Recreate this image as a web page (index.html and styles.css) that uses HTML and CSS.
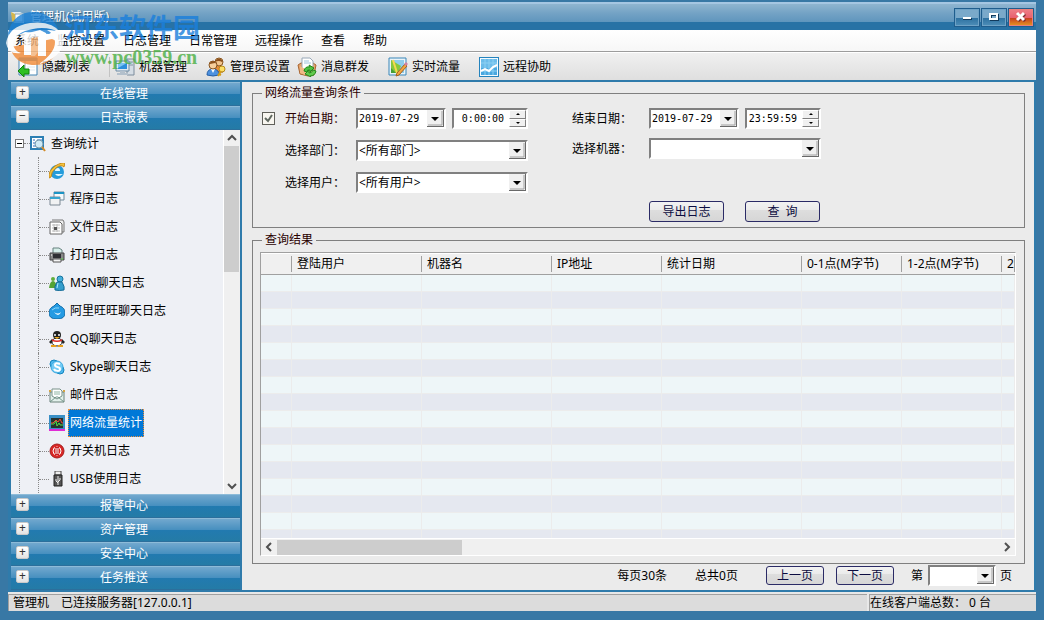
FILE: index.html
```html
<!DOCTYPE html>
<html lang="zh-CN">
<head>
    <meta charset="UTF-8">
    <meta name="viewport" content="width=device-width, initial-scale=1.0">
    <title>管理机(试用版)</title>
    <link rel="stylesheet" href="styles.css">
</head>
<body>

<!-- title bar -->
<header class="titlebar">
    <svg class="app-icon" viewBox="0 0 16 16"><path d="M1 3h9l4 2v9H4z" fill="#dfe9ee"/><path d="M5 5h8v8H5z" fill="#f7fbfd" stroke="#8aa5b5"/><path d="M1 3l4 2v9l-3-2z" fill="#d5b64c"/></svg>
    <h1>管理机(试用版)</h1>
    <div class="win-buttons">
        <button class="win-btn" aria-label="最小化"><svg viewBox="0 0 16 12"><path d="M4 7h9v2H4z" fill="#123a5c"/><path d="M4 6h8v2H4z" fill="#fff"/></svg></button>
        <button class="win-btn" aria-label="最大化"><svg viewBox="0 0 16 12"><path d="M5 4h7v5H5z" fill="none" stroke="#123a5c" stroke-width="2"/><path d="M4 3h7v5H4z" fill="none" stroke="#fff" stroke-width="2"/></svg></button>
        <button class="win-btn win-close" aria-label="关闭"><svg viewBox="0 0 16 12"><path d="M5 3l7 7M12 3l-7 7" stroke="#7a2e2e" stroke-width="3"/><path d="M4 2l7 7M11 2L4 9" stroke="#fff" stroke-width="3"/></svg></button>
    </div>
</header>

<nav class="menu">
    <a href="#">系统</a>
    <a href="#">监控设置</a>
    <a href="#">日志管理</a>
    <a href="#">日常管理</a>
    <a href="#">远程操作</a>
    <a href="#">查看</a>
    <a href="#">帮助</a>
</nav>

<div class="toolbar">
    <button class="tool">
        <svg viewBox="0 0 20 20"><path d="M1 1h18v17H1z" fill="#fff" stroke="#4385b5"/><path d="M1 1h18v3H1z" fill="#5aa3d4"/><path d="M7 4v14" stroke="#9ab"/><path d="M9 7h8M9 10h8M9 13h8" stroke="#dce8f0"/><path d="M0 14l6-6v4h5v5H6v3z" fill="#2fc022" stroke="#12820f"/></svg>
        隐藏列表
    </button>
    <span class="tool-sep"></span>
    <button class="tool">
        <svg viewBox="0 0 20 20"><path d="M12 2h7v16h-7z" fill="#d5dde5" stroke="#7d8c9c"/><path d="M13 5h5M13 8h5" stroke="#8594a4"/><path d="M1 4h13v10H1z" fill="#dfe8ef" stroke="#6d8ba4"/><path d="M3 6h9v6H3z" fill="#2d8fdc"/><path d="M3 6h9l-9 5z" fill="#7cc3f2"/><path d="M5 14h5v2h3v2H2v-2h3z" fill="#b3c0cc"/></svg>
        机器管理
    </button>
    <button class="tool">
        <svg viewBox="0 0 20 20"><path d="M9 10q5-4 8 1v4H9z" fill="#e58c37" stroke="#a45915"/><circle cx="13" cy="5" r="4" fill="#f3c68e" stroke="#885521"/><path d="M9 4q4-5 8 0l-1 1q-3-2-7 0z" fill="#8b501c"/><path d="M1 18q0-6 6-6t6 6q-6 2-12 0z" fill="#4d91df" stroke="#245da5"/><path d="M5 12l2 4 2-4z" fill="#fff"/><circle cx="7" cy="8" r="4" fill="#f7cf9b" stroke="#885521"/><path d="M3 7q4-6 8 0l-2-1-5 1z" fill="#8b501c"/><circle cx="16" cy="12" r="3" fill="#fbe067" stroke="#b98919"/><path d="M15 14l-3 5M13 17l2 1" stroke="#d39b18" stroke-width="2"/></svg>
        管理员设置
    </button>
    <button class="tool">
        <svg viewBox="0 0 20 20"><path d="M1 8l3-2h12l3 2-2 10-6 1-8-2z" fill="#e6a56b" stroke="#a86430"/><path d="M5 1h8l3 3v9H5z" fill="#fff" stroke="#98a8b8"/><path d="M7 4h5M7 6h7" stroke="#9fc4dd"/><path d="M3 9l5 3 8-3v8l-8 1-5-2z" fill="#efb986"/><path d="M7 14q1-5 6-4l-1-2 5 3-4 4v-2q-3-1-3 2z" fill="#4fc242" stroke="#24891d"/><path d="M19 14q-1 5-6 5l1 1-6-3 4-4v3q3 0 4-3z" fill="#62cb4e" stroke="#24891d"/></svg>
        消息群发
    </button>
    <button class="tool">
        <svg viewBox="0 0 20 20"><path d="M1 1h17v17H1z" fill="#e9f3f8" stroke="#3b87b9"/><path d="M3 3h13v13H3z" fill="#8ecdeb"/><path d="M3 3l10 6-3 7H3z" fill="#86c83c"/><path d="M5 3l4 13" stroke="#f6d94e" stroke-width="2"/><path d="M3 11l5 5H3z" fill="#459d35"/><path d="M17 7l2 2-8 9-3 1 1-3z" fill="#f2a63d" stroke="#a45f21"/><path d="M17 6l2 2" stroke="#cf82a1" stroke-width="3"/></svg>
        实时流量
    </button>
    <button class="tool">
        <svg viewBox="0 0 20 20"><path d="M0 0h20v20H0z" fill="#2483bd"/><path d="M1 1h18v18H1z" fill="#f2faff"/><path d="M2 2h16v16H2z" fill="#49a7df"/><path d="M2 2h16v7H2z" fill="#6bbcea"/><path d="M2 6h16M2 10h16M2 14h16M6 2v16M10 2v16M14 2v16" stroke="#8cd0f3"/><path d="M2 14l4-2 4 2 4-4 4-2" fill="none" stroke="#fff" stroke-width="2"/></svg>
        远程协助
    </button>
</div>

<main class="main">

    <aside class="sidebar">
        <button class="group"><span class="box">+</span>在线管理</button>
        <button class="group"><span class="box">−</span>日志报表</button>

        <div class="tree-area">
            <div class="tree">
                <div class="root">
                    <span class="toggle"></span><span class="dots"></span>
                    <svg viewBox="0 0 16 16"><path d="M1 1h12v12H1z" fill="#fff" stroke="#2c7fb4" stroke-width="2"/><path d="M3 4h2M3 7h2M3 10h3M7 4h5" stroke="#2669be" stroke-width="1"/><circle cx="9" cy="8" r="4" fill="#cfeaf6" stroke="#7799aa"/><path d="M12 11l3 4" stroke="#d38b28" stroke-width="2"/></svg>
                    查询统计
                </div>
                <ul>
                    <li><svg viewBox="0 0 16 16"><circle cx="8" cy="9" r="7" fill="#249cdb"/><path d="M11 8H6q0-3 3-3 2 0 2 3zM6 11h8q-5 4-8 0z" fill="#dff6ff"/><path d="M0 15Q-1 8 6 3q7-4 10-3l-1 4q-3-3-8 1-5 4-5 9z" fill="#f4c33b" stroke="#c3881b" stroke-width="1"/></svg><a href="#">上网日志</a></li>
                    <li><svg viewBox="0 0 16 16"><path d="M5 1h10v8H5z" fill="#f5fafc" stroke="#70899a"/><path d="M5 1h10v2H5z" fill="#1c94c5"/><path d="M1 6h10v8H1z" fill="#f1f2f3" stroke="#7c8994"/><path d="M1 6h10v2H1z" fill="#37a5d0"/></svg><a href="#">程序日志</a></li>
                    <li><svg viewBox="0 0 16 16"><path d="M3 1h11l1 2v10h-2" fill="#eee" stroke="#777"/><path d="M1 3h10l2 2v10H1z" fill="#fff" stroke="#666"/><path d="M3 6h8M3 9h8M3 12h8M5 5v8M8 5v8" stroke="#bbb"/><path d="M5 8h3v3H5z" fill="#555"/></svg><a href="#">文件日志</a></li>
                    <li><svg viewBox="0 0 16 16"><path d="M4 1h6l3 2v5H4z" fill="#d7eee9" stroke="#66817e"/><path d="M1 6h14v7H1z" fill="#888" stroke="#444"/><path d="M4 7h8v4H4z" fill="#2e2e32"/><path d="M4 12h8v3H4z" fill="#f5f5f5" stroke="#555"/><path d="M2 8h1" stroke="#fff"/><path d="M12 12h2" stroke="#61d94d"/></svg><a href="#">打印日志</a></li>
                    <li><svg viewBox="0 0 16 16"><circle cx="4" cy="4" r="2" fill="#62ae3c"/><path d="M0 13q1-7 4-7t4 7z" fill="#55a335"/><circle cx="11" cy="4" r="3" fill="#45b0dd" stroke="#16749e"/><path d="M6 15q-1-3 2-8h5q3 5 2 8-5 1-9 0z" fill="#349ecd" stroke="#146b96"/><path d="M9 8l-1 5" stroke="#a9e8ff"/></svg><a href="#">MSN聊天日志</a></li>
                    <li><svg viewBox="0 0 16 16"><path d="M8 0l3 3q5 2 5 7 0 6-8 6t-8-6q0-5 5-7z" fill="#259be3" stroke="#126da8"/><path d="M3 7q3-3 7-2" fill="none" stroke="#8ad9fa"/><path d="M5 9q4 3 7 0-1 3-3 3T5 9z" fill="#fff"/></svg><a href="#">阿里旺旺聊天日志</a></li>
                    <li><svg viewBox="0 0 16 16"><path d="M3 8l-3 3 2 2 2-3M13 8l3 3-2 2-2-3" fill="#222"/><ellipse cx="8" cy="11" rx="5" ry="4" fill="#fff" stroke="#222"/><circle cx="8" cy="4" r="4" fill="#222"/><circle cx="6" cy="4" r="1" fill="#fff"/><circle cx="10" cy="4" r="1" fill="#fff"/><path d="M5 6h6l-3 2z" fill="#efad22"/><path d="M3 8q5 3 10 0v2q-5 2-10 0z" fill="#d92a2a"/><path d="M2 15h5M9 15h5" stroke="#e8a01b" stroke-width="2"/></svg><a href="#">QQ聊天日志</a></li>
                    <li><svg viewBox="0 0 16 16"><circle cx="5" cy="5" r="4" fill="#50baf1" stroke="#1484bd"/><circle cx="11" cy="11" r="4" fill="#50baf1" stroke="#1484bd"/><circle cx="8" cy="8" r="6" fill="#72cbf6" stroke="#3ba8dd"/><path d="M11 5Q6 3 6 6c0 3 5 1 5 4 0 3-5 2-6 0" fill="none" stroke="#fff" stroke-width="2"/></svg><a href="#">Skype聊天日志</a></li>
                    <li><svg viewBox="0 0 16 16"><path d="M1 5h14v10H1z" fill="#e3f1ec" stroke="#6b817b"/><path d="M3 9V2h8l2 2v5l-5 3z" fill="#fff" stroke="#789188"/><path d="M5 5h6M5 7h6" stroke="#8fb5a5"/><path d="M1 15l6-5h2l6 5" fill="none" stroke="#73968b"/><path d="M0 4h2M14 4h2" stroke="#d6a544" stroke-width="2"/></svg><a href="#">邮件日志</a></li>
                    <li class="active"><svg viewBox="0 0 16 16"><path d="M0 0h16v16H0z" fill="#398fc5"/><path d="M0 15h16" stroke="#e02bd5" stroke-width="2"/><path d="M2 3h12v10H2z" fill="#27312c"/><path d="M2 9h3l2-3 1 5 2-3 1 2h3" fill="none" stroke="#4bdd47"/><path d="M2 8h2l3-3 2 2 2-3 2 4h1" fill="none" stroke="#f04738"/></svg><a href="#">网络流量统计</a></li>
                    <li><svg viewBox="0 0 16 16"><circle cx="8" cy="8" r="7" fill="#d92725" stroke="#a51e1e"/><circle cx="8" cy="8" r="4" fill="none" stroke="#fff"/><path d="M6 4h4v8H6z" fill="#c81f21"/><path d="M7 5v6M9 5v6" stroke="#fff"/></svg><a href="#">开关机日志</a></li>
                    <li><svg viewBox="0 0 16 16"><path d="M6 0h6v4H6z" fill="#eee" stroke="#444"/><path d="M5 4h8v11H5z" fill="#555" stroke="#222"/><path d="M9 5v9M7 8v2l2 2M11 7v2l-2 2" fill="none" stroke="#eee"/></svg><a href="#">USB使用日志</a></li>
                </ul>
            </div>
            <div class="vscroll">
                <button aria-label="向上"><svg viewBox="0 0 10 10"><path d="M1 7l4-4 4 4" fill="none" stroke="#505050" stroke-width="2"/></svg></button>
                <span class="vtrack"><span class="vthumb"></span></span>
                <button aria-label="向下"><svg viewBox="0 0 10 10"><path d="M1 3l4 4 4-4" fill="none" stroke="#505050" stroke-width="2"/></svg></button>
            </div>
        </div>

        <button class="group"><span class="box">+</span>报警中心</button>
        <button class="group"><span class="box">+</span>资产管理</button>
        <button class="group"><span class="box">+</span>安全中心</button>
        <button class="group"><span class="box">+</span>任务推送</button>
    </aside>

    <section class="content">

        <fieldset class="query">
            <legend>网络流量查询条件</legend>
            <div class="form-col form-left">
                <div class="row">
                    <input type="checkbox" id="use-date" checked>
                    <label for="use-date" class="dark-red">开始日期：</label>
                    <span class="field">
                        <span class="date"><input type="text" value="2019-07-29" aria-label="开始日期"><button class="drop" aria-label="选择日期"></button></span>
                        <span class="time"><input type="text" value="0:00:00" aria-label="开始时间"><span class="spin"><button class="up" aria-label="增加"></button><button class="down" aria-label="减少"></button></span></span>
                    </span>
                </div>
                <div class="row">
                    <label for="dept">选择部门：</label>
                    <select id="dept" class="field"><option>&lt;所有部门&gt;</option></select>
                </div>
                <div class="row">
                    <label for="user">选择用户：</label>
                    <select id="user" class="field"><option>&lt;所有用户&gt;</option></select>
                </div>
            </div>
            <div class="form-col form-right">
                <div class="row">
                    <label for="end-date">结束日期：</label>
                    <span class="field">
                        <span class="date"><input type="text" id="end-date" value="2019-07-29"><button class="drop" aria-label="选择日期"></button></span>
                        <span class="time"><input type="text" value="23:59:59" aria-label="结束时间"><span class="spin"><button class="up" aria-label="增加"></button><button class="down" aria-label="减少"></button></span></span>
                    </span>
                </div>
                <div class="row">
                    <label for="machine">选择机器：</label>
                    <select id="machine" class="field"><option></option></select>
                </div>
                <div class="actions">
                    <button class="btn">导出日志</button>
                    <button class="btn">查&nbsp; 询</button>
                </div>
            </div>
        </fieldset>

        <fieldset class="result">
            <legend>查询结果</legend>
            <div class="list">
                <div class="list-view">
                    <table>
                        <colgroup><col class="c-mark"><col class="c-name"><col class="c-name"><col class="c-ip"><col class="c-date"><col class="c-hour"><col class="c-hour"><col></colgroup>
                        <thead>
                            <tr><th></th><th>登陆用户</th><th>机器名</th><th>IP地址</th><th>统计日期</th><th>0-1点(M字节)</th><th>1-2点(M字节)</th><th>2</th></tr>
                        </thead>
                        <tbody>
                            <tr><td></td><td></td><td></td><td></td><td></td><td></td><td></td><td></td></tr>
                            <tr><td></td><td></td><td></td><td></td><td></td><td></td><td></td><td></td></tr>
                            <tr><td></td><td></td><td></td><td></td><td></td><td></td><td></td><td></td></tr>
                            <tr><td></td><td></td><td></td><td></td><td></td><td></td><td></td><td></td></tr>
                            <tr><td></td><td></td><td></td><td></td><td></td><td></td><td></td><td></td></tr>
                            <tr><td></td><td></td><td></td><td></td><td></td><td></td><td></td><td></td></tr>
                            <tr><td></td><td></td><td></td><td></td><td></td><td></td><td></td><td></td></tr>
                            <tr><td></td><td></td><td></td><td></td><td></td><td></td><td></td><td></td></tr>
                            <tr><td></td><td></td><td></td><td></td><td></td><td></td><td></td><td></td></tr>
                            <tr><td></td><td></td><td></td><td></td><td></td><td></td><td></td><td></td></tr>
                            <tr><td></td><td></td><td></td><td></td><td></td><td></td><td></td><td></td></tr>
                            <tr><td></td><td></td><td></td><td></td><td></td><td></td><td></td><td></td></tr>
                            <tr><td></td><td></td><td></td><td></td><td></td><td></td><td></td><td></td></tr>
                            <tr><td></td><td></td><td></td><td></td><td></td><td></td><td></td><td></td></tr>
                            <tr><td></td><td></td><td></td><td></td><td></td><td></td><td></td><td></td></tr>
                            <tr><td></td><td></td><td></td><td></td><td></td><td></td><td></td><td></td></tr>
                        </tbody>
                    </table>
                </div>
                <div class="hscroll">
                    <button aria-label="向左"><svg viewBox="0 0 10 10"><path d="M7 1L3 5l4 4" fill="none" stroke="#505050" stroke-width="2"/></svg></button>
                    <span class="htrack"><span class="hthumb"></span></span>
                    <button aria-label="向右"><svg viewBox="0 0 10 10"><path d="M3 1l4 4-4 4" fill="none" stroke="#505050" stroke-width="2"/></svg></button>
                </div>
            </div>
        </fieldset>

        <div class="pager">
            <span class="per-page">每页30条</span>
            <span class="total">总共0页</span>
            <button class="btn">上一页</button>
            <button class="btn">下一页</button>
            <label for="page">第</label>
            <select id="page"><option></option></select>
            <span>页</span>
        </div>

    </section>
</main>

<footer class="status">
    <span class="status-left"><span>管理机</span><span>已连接服务器[127.0.0.1]</span></span>
    <span class="status-right">在线客户端总数： 0 台</span>
</footer>

<!-- site mark over the top left corner -->
<div class="mark">
    <svg viewBox="0 0 60 60">
        <path d="M3 24Q8 3 29 3q17 0 24 17l-9 5-24-2-16 8z" fill="#1c80d4"/>
        <path d="M5 38q4 16 22 18 23 1 29-22l-9-4-30 6z" fill="#f28a36"/>
        <path d="M1 34Q4 17 25 14q22-3 31 10-13-7-28-4Q10 23 8 35q1 7 8 9Q3 46 1 34z" fill="#fff"/>
        <path d="M59 31q-2 18-25 24 16-11 16-22 0-8-8-12 17 0 17 10z" fill="#fff"/>
        <path d="M15 26l20-5 6 3v23h-8V28l-7 1v17h-7V31z" fill="#fff"/>
        <path d="M26 29l7-1v15l-3 4h-4z" fill="#f6b57c"/>
    </svg>
    <div class="mark-text">
        <span class="mark-name">河东软件园</span>
        <span class="mark-url">www.pc0359.cn</span>
    </div>
</div>

</body>
</html>
```
FILE: styles.css
```css
* {
    box-sizing: border-box;
}

body {
    margin: 0;
    padding: 2px 8px 9px;
    min-height: 100vh;
    display: flex;
    flex-direction: column;
    background-color: #3878a5;
    color: #000;
    font-family: "Noto Sans", "Noto Sans CJK SC", sans-serif;
    font-size: 12px;
    line-height: 16px;
}

button, input, select {
    font: inherit;
    color: inherit;
    margin: 0;
    padding: 0;
    border: 0;
    border-radius: 0;
}

a {
    color: inherit;
    text-decoration: none;
}

/* title bar */
.titlebar {
    display: flex;
    align-items: center;
    gap: 4px;
    height: 28px;
    padding: 0 2px;
    border-top: 2px solid #a5c6e2;
    background: linear-gradient(#8fb5d0, #74a3c5 9px, #5f95bd 18px, #2872a5 18px);
}

.app-icon {
    width: 16px;
    height: 16px;
}

.titlebar h1 {
    flex: 1;
    margin: 0;
    color: #fff;
    font-size: 12px;
    font-weight: normal;
    text-shadow: 1px 1px 1px #24597f;
}

.win-buttons {
    display: flex;
    gap: 1px;
}

.win-btn {
    display: flex;
    align-items: center;
    justify-content: center;
    width: 26px;
    height: 19px;
    border: 1px solid #1f5d8d;
    box-shadow: inset 0 0 0 1px #6ea2c6;
    background: linear-gradient(#7aa9ca 50%, #2b6f9f 50%, #4f8fb9);
}

.win-btn svg {
    width: 16px;
    height: 12px;
}

.win-close {
    background: linear-gradient(#ee8088, #e86170 50%, #c5371f 50%, #e79a20);
    box-shadow: inset 0 0 0 1px #e8807c;
}

/* menu and toolbar */
.menu {
    display: flex;
    gap: 18px;
    height: 22px;
    padding: 3px 7px 0;
    border-bottom: 1px solid #9c9c9c;
    background: linear-gradient(#fff, #f7f7f7);
}

.toolbar {
    display: flex;
    align-items: center;
    height: 28px;
    padding-left: 10px;
    border-top: 1px solid #fff;
    background: linear-gradient(#f0f0f0, #dfdfdf);
}

.tool {
    display: flex;
    align-items: center;
    gap: 4px;
    min-width: 91px;
    background: none;
    white-space: nowrap;
}

.tool svg {
    width: 20px;
    height: 20px;
}

.tool-sep {
    height: 20px;
    margin-right: 5px;
    border-left: 1px solid #c3c3c3;
}

/* left side */
.main {
    flex: 1;
    display: flex;
    padding: 2px 2px 2px 3px;
    background-color: #2f7bab;
}

.sidebar {
    display: flex;
    flex-direction: column;
    width: 229px;
}

.group {
    display: flex;
    align-items: center;
    height: 24px;
    padding-left: 5px;
    border-top: 1px solid #8dbbd8;
    border-bottom: 1px solid #2c6f9c;
    background: linear-gradient(#72a8ce, #468fbf 11px, #227ab0 11px, #247ba6);
    color: #fff;
}

.box {
    width: 13px;
    height: 13px;
    margin: 0 71px 3px 0;
    border: 1px solid #c9c9c9;
    border-radius: 2px;
    background: linear-gradient(#fff, #e2e2e2);
    color: #333;
    font-size: 12px;
    line-height: 10px;
}

.tree-area {
    flex: 1 1 0;
    display: flex;
    min-height: 0;
    overflow: hidden;
    background-color: #eef0f5;
}

.tree {
    flex: 1;
    overflow: hidden;
}

.tree svg {
    width: 16px;
    height: 16px;
}

.root {
    display: flex;
    align-items: center;
    height: 27px;
    padding-left: 4px;
}

.root svg {
    margin-right: 5px;
}

.toggle {
    display: flex;
    align-items: center;
    justify-content: center;
    width: 9px;
    height: 9px;
    border: 1px solid #777;
    background-color: #fff;
}

.toggle::before {
    content: "";
    width: 5px;
    border-top: 1px solid #000;
}

.dots {
    width: 6px;
    border-top: 1px dotted #888;
}

.tree ul {
    margin: 0 0 0 8px;
    padding: 0 0 0 18px;
    border-left: 1px dotted #888;
    list-style: none;
}

.tree li {
    display: flex;
    align-items: center;
    height: 28px;
    border-left: 1px dotted #888;
}

.tree li::before {
    content: "";
    width: 10px;
    border-top: 1px dotted #888;
}

.tree li a {
    margin-left: 3px;
    padding: 5px 1px;
    border: 1px dotted transparent;
}

.tree .active a {
    border-color: #f0913a;
    background-color: #0078d7;
    color: #fff;
}

.vscroll {
    display: flex;
    flex-direction: column;
    width: 17px;
    border-left: 1px solid #fff;
    background-color: #f0f0f0;
}

.vscroll button,
.hscroll button {
    display: flex;
    align-items: center;
    justify-content: center;
    width: 16px;
    height: 16px;
    background: none;
}

.vscroll svg,
.hscroll svg {
    width: 10px;
    height: 10px;
}

.vtrack {
    flex: 1;
}

.vthumb {
    display: block;
    width: 15px;
    height: 38%;
    background-color: #cdcdcd;
}

/* right side */
.content {
    flex: 1;
    min-width: 0;
    display: flex;
    flex-direction: column;
    margin-left: 2px;
    padding: 3px 9px 4px 10px;
    background-color: #ebebeb;
}

fieldset {
    min-width: 0;
    margin: 0;
    border: 1px solid #7f7f7f;
}

legend {
    padding: 0 3px;
    color: #2a0000;
}

.query {
    display: flex;
    gap: 44px;
    padding: 7px 9px 5px;
}

.form-col {
    display: flex;
    flex-direction: column;
}

.form-left {
    gap: 11px;
}

.form-right {
    gap: 9px;
}

.row {
    display: flex;
    align-items: center;
    justify-content: flex-end;
    height: 21px;
}

.row label {
    width: 60px;
    margin-right: 11px;
}

.form-right label {
    margin-right: 17px;
}

.row input[type="checkbox"] {
    appearance: none;
    width: 13px;
    height: 13px;
    margin-right: 10px;
    border: 1px solid #60605a;
    background: #f8f6f0 url("data:image/svg+xml,%3Csvg xmlns='http://www.w3.org/2000/svg' viewBox='0 0 11 11'%3E%3Cpath d='M2 5l3 3 4-6' fill='none' stroke='%23606860' stroke-width='2'/%3E%3C/svg%3E");
}

.dark-red {
    color: #2a0000;
}

.field {
    display: flex;
    justify-content: space-between;
    width: 172px;
}

.date, .time, select {
    border: 2px solid;
    border-color: #808080 #fff #fff #808080;
    background-color: #fff;
}

.date, .time {
    display: flex;
    height: 21px;
}

.date {
    width: 90px;
}

.time {
    width: 76px;
}

.date input, .time input {
    flex: 1;
    min-width: 0;
    padding-left: 1px;
    background: none;
    font-family: "DejaVu Sans Mono", monospace;
    font-size: 10px;
}

.time input {
    padding-right: 5px;
    text-align: right;
}

.drop {
    width: 17px;
    background: url("data:image/svg+xml,%3Csvg xmlns='http://www.w3.org/2000/svg' viewBox='0 0 17 17'%3E%3Cpath d='M0 0h17v17H0z' fill='%23696969'/%3E%3Cpath d='M0 0h16v16H0z' fill='%23f0f0f0'/%3E%3Cpath d='M1 15h14V1' fill='none' stroke='%23a0a0a0'/%3E%3Cpath d='M4 7h8L8 11z'/%3E%3C/svg%3E") center / 17px 17px;
}

.spin {
    display: flex;
    flex-direction: column;
    width: 17px;
}

.spin button {
    flex: 1;
    border: 1px solid;
    border-color: #fff #808080 #808080 #fff;
    background: #f0f0f0 url("data:image/svg+xml,%3Csvg xmlns='http://www.w3.org/2000/svg' viewBox='0 0 4 2'%3E%3Cpath d='M0 2h4L2 0z'/%3E%3C/svg%3E") center / 4px 2px no-repeat;
}

.spin .down {
    background-image: url("data:image/svg+xml,%3Csvg xmlns='http://www.w3.org/2000/svg' viewBox='0 0 4 2'%3E%3Cpath d='M0 0h4L2 2z'/%3E%3C/svg%3E");
}

select {
    appearance: none;
    height: 21px;
    padding-left: 1px;
    line-height: 16px;
    background: #fff url("data:image/svg+xml,%3Csvg xmlns='http://www.w3.org/2000/svg' viewBox='0 0 17 17'%3E%3Cpath d='M0 0h17v17H0z' fill='%23696969'/%3E%3Cpath d='M0 0h16v16H0z' fill='%23f0f0f0'/%3E%3Cpath d='M1 15h14V1' fill='none' stroke='%23a0a0a0'/%3E%3Cpath d='M4 7h8L8 11z'/%3E%3C/svg%3E") right center / 17px 17px no-repeat;
}

.actions {
    display: flex;
    justify-content: flex-end;
    gap: 21px;
    margin-top: 33px;
    padding-right: 1px;
}

.btn {
    width: 75px;
    height: 21px;
    border: 1px solid #2b2b66;
    border-radius: 3px;
    background: linear-gradient(#f2f2f2, #ebebeb 40%, #dedede 40%, #d6d6d6);
    color: #0c0c40;
    line-height: 16px;
}

.result {
    flex: 1;
    display: flex;
    margin-top: 4px;
    padding: 4px 8px 7px 7px;
}

.result legend {
    margin-left: 2px;
}

.list {
    flex: 1;
    min-width: 0;
    display: flex;
    flex-direction: column;
    border: 1px solid;
    border-color: #a0a0a0 #fff #fff #a0a0a0;
}

.list-view {
    flex: 1 1 0;
    min-height: 0;
    overflow: hidden;
    background-color: #eef6f8;
}

table {
    width: 100%;
    table-layout: fixed;
    border-collapse: separate;
    border-spacing: 0;
}

.c-mark { width: 31px; }
.c-name { width: 130px; }
.c-ip { width: 110px; }
.c-date { width: 140px; }
.c-hour { width: 100px; }

th {
    height: 22px;
    padding: 0 0 0 5px;
    border-top: 1px solid #fff;
    border-bottom: 1px solid #a0a0a0;
    background: linear-gradient(#a0a0a0, #a0a0a0) right center / 1px 16px no-repeat #f0f0f0;
    font-weight: normal;
    text-align: left;
}

td {
    height: 17px;
    padding: 0;
    border-right: 1px solid #ececec;
    border-bottom: 1px solid #ececec;
    background-color: #eef6f8;
}

tbody tr:nth-child(even) td {
    background-color: #e5e8f0;
}

.hscroll {
    display: flex;
    align-items: center;
    height: 17px;
    border-top: 1px solid #fff;
    background-color: #f0f0f0;
}

.htrack {
    flex: 1;
}

.hthumb {
    display: block;
    width: 185px;
    height: 15px;
    background-color: #cdcdcd;
}

.pager {
    display: flex;
    align-items: center;
    justify-content: flex-end;
    height: 21px;
    margin-top: 1px;
    padding-right: 13px;
}

.pager .btn {
    width: 58px;
    height: 19px;
    margin-right: 12px;
}

.per-page, .total {
    margin-right: 28px;
}

.pager label {
    margin: 0 5px;
}

.pager select {
    width: 68px;
    margin-right: 4px;
}

/* status bar */
.status {
    display: flex;
    gap: 2px;
    height: 19px;
    border-top: 2px solid #e8e8e8;
    background-color: #e8e8e8;
}

.status-left, .status-right {
    border-top: 1px solid #a0a0a0;
    border-left: 1px solid #a0a0a0;
    background-color: #dcdcdc;
}

.status-left {
    flex: 1;
    display: flex;
    gap: 12px;
    padding-left: 4px;
}

.status-right {
    width: 167px;
}

/* site mark */
.mark {
    position: absolute;
    top: 9px;
    left: 5px;
    display: flex;
    opacity: 0.8;
    pointer-events: none;
}

.mark svg {
    width: 60px;
    height: 60px;
}

.mark-text {
    display: flex;
    flex-direction: column;
}

.mark-name {
    color: #1a7fdc;
    font-size: 27px;
    font-weight: bold;
    line-height: 38px;
}

.mark-url {
    color: #4bb045;
    font-family: "Liberation Serif", serif;
    font-size: 20px;
    font-weight: bold;
    line-height: 20px;
}
```
